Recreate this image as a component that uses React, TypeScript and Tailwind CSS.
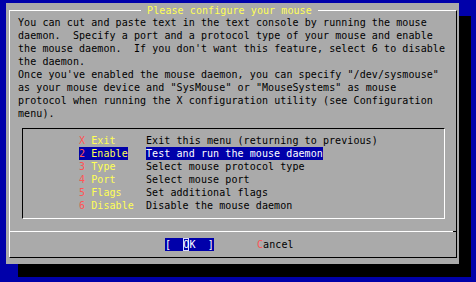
import React from "react";

const lines = [
  "You can cut and paste text in the text console by running the mouse",
  "daemon.  Specify a port and a protocol type of your mouse and enable",
  "the mouse daemon.  If you don't want this feature, select 6 to disable",
  "the daemon.",
  'Once you\'ve enabled the mouse daemon, you can specify "/dev/sysmouse"',
  'as your mouse device and "SysMouse" or "MouseSystems" as mouse',
  "protocol when running the X configuration utility (see Configuration",
  "menu).",
];

const items = [
  { key: "X", name: "Exit", desc: "Exit this menu (returning to previous)" },
  { key: "2", name: "Enable", desc: "Test and run the mouse daemon", sel: true },
  { key: "3", name: "Type", desc: "Select mouse protocol type" },
  { key: "4", name: "Port", desc: "Select mouse port" },
  { key: "5", name: "Flags", desc: "Set additional flags" },
  { key: "6", name: "Disable", desc: "Disable the mouse daemon" },
];

export default function App() {
  return (
    <div className="w-[476px] h-[282px] overflow-hidden bg-[#0000aa] pl-[6px] pt-[3px] font-['DejaVu_Sans_Mono',monospace] text-[10px] tracking-[0.08px] leading-[13px] text-black">
      <div className="w-[453px] h-[261px] bg-[#aaaaaa] shadow-[12px_13px_0_0_#000] pt-[7px] pl-[3px]">
        <div className="relative w-[448px] h-[248px] border border-t-white border-l-white border-r-black border-b-black flex flex-col">
          <div className="absolute left-[131px] top-[-7px] h-[13px] bg-[#aaaaaa] text-[#ffff55] whitespace-pre">
            {" Please configure your mouse "}
          </div>
          <div className="pt-[5px] pl-[8px] flex flex-col">
            {lines.map((l, i) => (
              <div key={i} className="h-[13px] whitespace-pre">
                {l}
              </div>
            ))}
          </div>
          <div className="mt-[8px] ml-[12px] w-[423px] h-[91px] border border-t-black border-l-black border-r-white border-b-white pt-[5px] pl-[56px] flex flex-col">
            {items.map((it) => (
              <div key={it.key} className="h-[13px] flex whitespace-pre">
                <div className="w-[67px] flex">
                  <span className={it.sel ? "bg-[#0000aa]" : ""}>
                    <span className="text-[#ff5555]">{it.key}</span>
                    <span className="text-[#ffff55]">{" " + it.name}</span>
                  </span>
                </div>
                <span className={it.sel ? "bg-[#0000aa] text-white" : ""}>{it.desc}</span>
              </div>
            ))}
          </div>
          <div className="mt-[12px] h-[1px] flex">
            <div className="flex-1 bg-white" />
            <div className="w-[3px] bg-black" />
          </div>
          <div className="mt-[6px] flex whitespace-pre">
            <div className="ml-[155px] w-[49px] h-[13px] bg-[#0000aa] text-white flex">
              <span>{"[  "}</span>
              <span className="shadow-[inset_0_0_0_1px_#d8d8ff]">O</span>
              <span>{"K  ]"}</span>
            </div>
            <div className="ml-[43px] h-[13px]">
              <span className="text-[#ff5555]">C</span>
              <span>ancel</span>
            </div>
          </div>
        </div>
      </div>
    </div>
  );
}
